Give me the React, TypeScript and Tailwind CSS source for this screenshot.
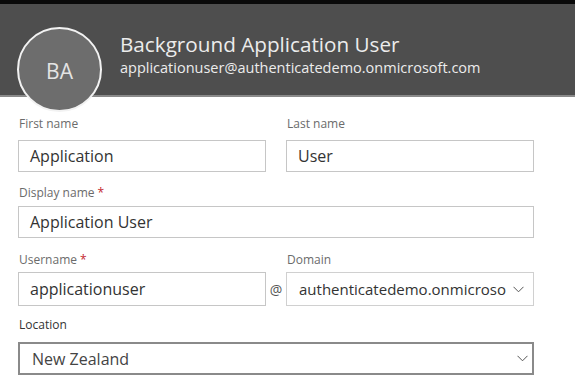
const font = { fontFamily: '"Open Sans", "Noto Sans", sans-serif' };

function Chevron() {
  return (
    <svg className="w-[11px] h-[7px] shrink-0" viewBox="0 0 11 7" fill="none" stroke="#555" strokeWidth={1}>
      <path d="M0.5 0.8 L5.5 5.8 L10.5 0.8" />
    </svg>
  );
}

function Label({ text, required, dark }: { text: string; required?: boolean; dark?: boolean }) {
  return (
    <div className={`text-[12px] leading-[16px] ${dark ? "text-[#333]" : "text-[#6b6b6b]"}`}>
      {text}
      {required && <span className="text-[#c4262e]"> *</span>}
    </div>
  );
}

function Field({ value, h = "h-[32px]" }: { value: string; h?: string }) {
  return (
    <div className={`${h} border border-[#c6c6c6] flex items-center pl-[11px] text-[16px] text-[#333]`}>
      {value}
    </div>
  );
}

export default function App() {
  return (
    <div className="w-[575px] h-[391px] bg-white overflow-hidden" style={font}>
      {/* Header */}
      <div className="h-[4px] bg-[#0a0a0a]" />
      <div className="h-[93px] bg-[#4e4e4e] flex items-start border-b-2 border-[#8a8a8a]">
        <div className="ml-[17px] mt-[23px] w-[85px] h-[85px] shrink-0 rounded-full bg-[#6d6d6d] border-2 border-[#f2f2f2] flex items-center justify-center pt-[4px] text-[21px] text-[#e4e4e4] relative z-10">
          BA
        </div>
        <div className="ml-[18px] mt-[26px] text-[#ececec]">
          <div className="text-[20.7px] leading-[28px]">Background Application User</div>
          <div className="text-[14.5px] leading-[20px]">applicationuser@authenticatedemo.onmicrosoft.com</div>
        </div>
      </div>

      {/* Form */}
      <div className="pl-[18px] pt-[19px] w-[534px]">
        <div className="grid grid-cols-[248px_248px] gap-x-[20px]">
          <div>
            <div className="pl-[1px] mb-[8px]"><Label text="First name" /></div>
            <Field value="Application" />
          </div>
          <div>
            <div className="pl-[1px] mb-[8px]"><Label text="Last name" /></div>
            <Field value="User" />
          </div>
        </div>

        <div className="mt-[13px]">
          <div className="pl-[1px] mb-[5px]"><Label text="Display name" required /></div>
          <Field value="Application User" />
        </div>

        <div className="mt-[14px] flex items-end">
          <div className="w-[248px]">
            <div className="pl-[1px] mb-[4px]"><Label text="Username" required /></div>
            <Field value="applicationuser" h="h-[34px]" />
          </div>
          <div className="w-[20px] h-[34px] flex items-center justify-center text-[14px] text-[#555]">@</div>
          <div className="w-[248px]">
            <div className="pl-[1px] mb-[4px]"><Label text="Domain" /></div>
            <div className="h-[34px] border border-[#d0d0d0] flex items-center justify-between pl-[12px] pr-[9px] text-[15px] text-[#333]">
              <span className="whitespace-nowrap">authenticatedemo.onmicroso</span>
              <Chevron />
            </div>
          </div>
        </div>

        <div className="mt-[11px]">
          <div className="pl-[1px] mb-[9px]"><Label text="Location" dark /></div>
          <div className="h-[33px] border-2 border-[#8a8a8a] flex items-center justify-between pl-[12px] pr-[4px] text-[16px] text-[#444]">
            <span>New Zealand</span>
            <Chevron />
          </div>
        </div>
      </div>
    </div>
  );
}
